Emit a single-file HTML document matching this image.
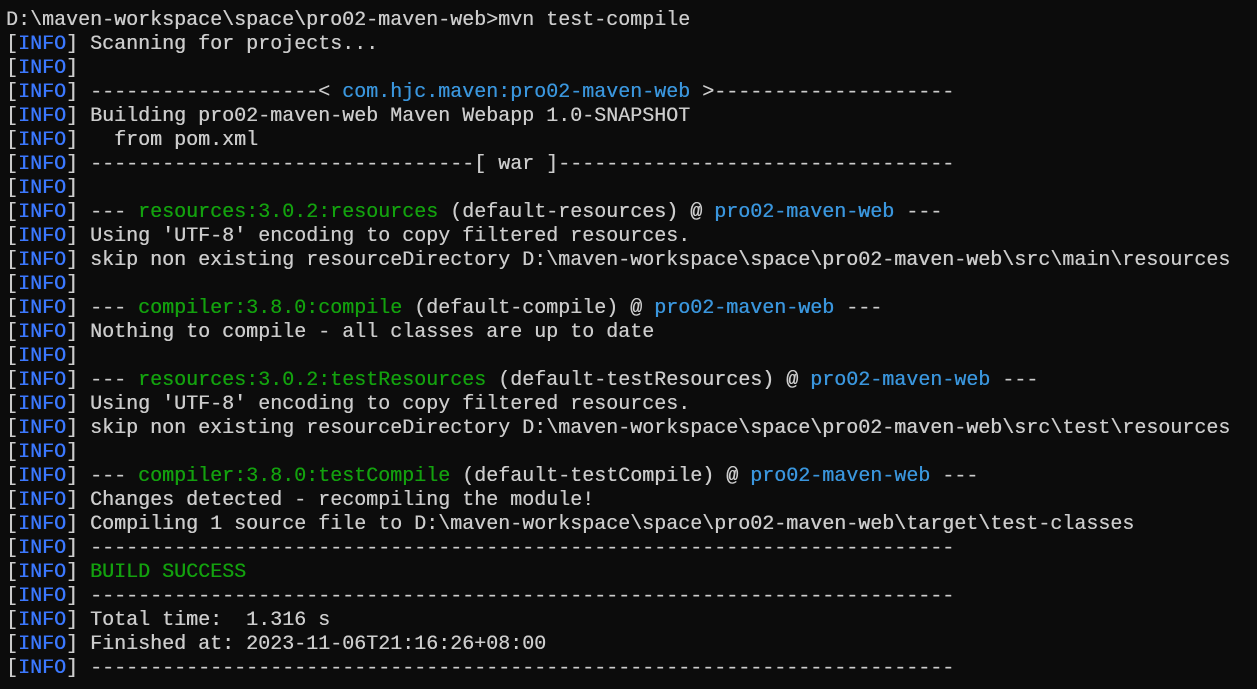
<!DOCTYPE html>
<html><head><meta charset="utf-8"><style>
html,body{margin:0;padding:0;background:#0c0c0c;width:1257px;height:689px;overflow:hidden}
pre{margin:0;padding:9px 0 0 6px;font-family:"Liberation Mono",monospace;font-size:20px;line-height:24px;color:#cccccc;letter-spacing:0;text-shadow:0.3px 0 0 currentColor}
.b{color:#3b78ff}.c{color:#3a96dd}.g{color:#13a10e}
</style></head><body><pre>D:\maven-workspace\space\pro02-maven-web&gt;mvn test-compile
[<span class="b">INFO</span>] Scanning for projects...
[<span class="b">INFO</span>]
[<span class="b">INFO</span>] -------------------&lt; <span class="c">com.hjc.maven:pro02-maven-web</span> &gt;--------------------
[<span class="b">INFO</span>] Building pro02-maven-web Maven Webapp 1.0-SNAPSHOT
[<span class="b">INFO</span>]   from pom.xml
[<span class="b">INFO</span>] --------------------------------[ war ]---------------------------------
[<span class="b">INFO</span>]
[<span class="b">INFO</span>] --- <span class="g">resources:3.0.2:resources</span> (default-resources) @ <span class="c">pro02-maven-web</span> ---
[<span class="b">INFO</span>] Using 'UTF-8' encoding to copy filtered resources.
[<span class="b">INFO</span>] skip non existing resourceDirectory D:\maven-workspace\space\pro02-maven-web\src\main\resources
[<span class="b">INFO</span>]
[<span class="b">INFO</span>] --- <span class="g">compiler:3.8.0:compile</span> (default-compile) @ <span class="c">pro02-maven-web</span> ---
[<span class="b">INFO</span>] Nothing to compile - all classes are up to date
[<span class="b">INFO</span>]
[<span class="b">INFO</span>] --- <span class="g">resources:3.0.2:testResources</span> (default-testResources) @ <span class="c">pro02-maven-web</span> ---
[<span class="b">INFO</span>] Using 'UTF-8' encoding to copy filtered resources.
[<span class="b">INFO</span>] skip non existing resourceDirectory D:\maven-workspace\space\pro02-maven-web\src\test\resources
[<span class="b">INFO</span>]
[<span class="b">INFO</span>] --- <span class="g">compiler:3.8.0:testCompile</span> (default-testCompile) @ <span class="c">pro02-maven-web</span> ---
[<span class="b">INFO</span>] Changes detected - recompiling the module!
[<span class="b">INFO</span>] Compiling 1 source file to D:\maven-workspace\space\pro02-maven-web\target\test-classes
[<span class="b">INFO</span>] ------------------------------------------------------------------------
[<span class="b">INFO</span>] <span class="g">BUILD SUCCESS</span>
[<span class="b">INFO</span>] ------------------------------------------------------------------------
[<span class="b">INFO</span>] Total time:  1.316 s
[<span class="b">INFO</span>] Finished at: 2023-11-06T21:16:26+08:00
[<span class="b">INFO</span>] ------------------------------------------------------------------------
</pre></body></html>
